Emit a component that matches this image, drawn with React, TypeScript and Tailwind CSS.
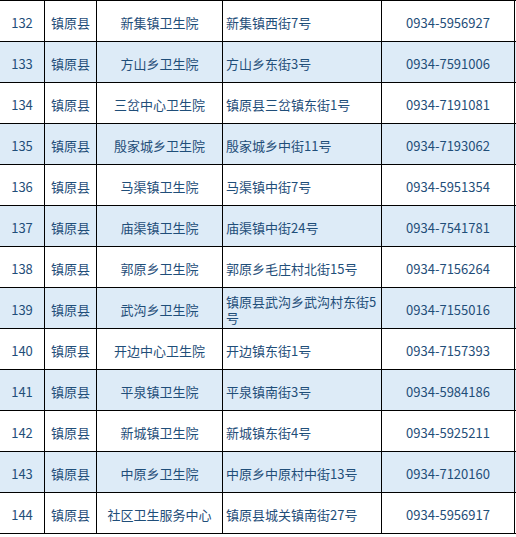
const rows = [
  ["132", "镇原县", "新集镇卫生院", "新集镇西街7号", "0934-5956927"],
  ["133", "镇原县", "方山乡卫生院", "方山乡东街3号", "0934-7591006"],
  ["134", "镇原县", "三岔中心卫生院", "镇原县三岔镇东街1号", "0934-7191081"],
  ["135", "镇原县", "殷家城乡卫生院", "殷家城乡中街11号", "0934-7193062"],
  ["136", "镇原县", "马渠镇卫生院", "马渠镇中街7号", "0934-5951354"],
  ["137", "镇原县", "庙渠镇卫生院", "庙渠镇中街24号", "0934-7541781"],
  ["138", "镇原县", "郭原乡卫生院", "郭原乡毛庄村北街15号", "0934-7156264"],
  ["139", "镇原县", "武沟乡卫生院", "镇原县武沟乡武沟村东街5号", "0934-7155016"],
  ["140", "镇原县", "开边中心卫生院", "开边镇东街1号", "0934-7157393"],
  ["141", "镇原县", "平泉镇卫生院", "平泉镇南街3号", "0934-5984186"],
  ["142", "镇原县", "新城镇卫生院", "新城镇东街4号", "0934-5925211"],
  ["143", "镇原县", "中原乡卫生院", "中原乡中原村中街13号", "0934-7120160"],
  ["144", "镇原县", "社区卫生服务中心", "镇原县城关镇南街27号", "0934-5956917"],
];

export default function App() {
  return (
    <div
      className="w-[516px] bg-white text-[13px] leading-[16px] text-[#1f4e79]"
      style={{ fontFamily: '"Noto Sans CJK SC", "Liberation Sans", sans-serif' }}
    >
      <div className="border-t border-black">
        {rows.map((r, i) => (
          <div
            key={r[0]}
            className={`h-[41px] border-b border-black ${i % 2 === 1 ? "bg-[#ddebf7]" : "bg-white"}`}
          >
            <div className="grid h-full w-[515px] grid-cols-[45px_52px_126px_159px_133px]">
              <div className="flex items-center justify-center border-r border-black pt-[3px]">{r[0]}</div>
              <div className="flex items-center justify-center border-r border-black pt-[3px]">{r[1]}</div>
              <div className="flex items-center justify-center border-r border-black pt-[3px]">{r[2]}</div>
              <div className="flex items-center border-r border-black pl-[3px] pr-[2px] pt-[3px]">{r[3]}</div>
              <div className="flex items-center justify-center border-r border-black pt-[3px]">{r[4]}</div>
            </div>
          </div>
        ))}
      </div>
    </div>
  );
}
